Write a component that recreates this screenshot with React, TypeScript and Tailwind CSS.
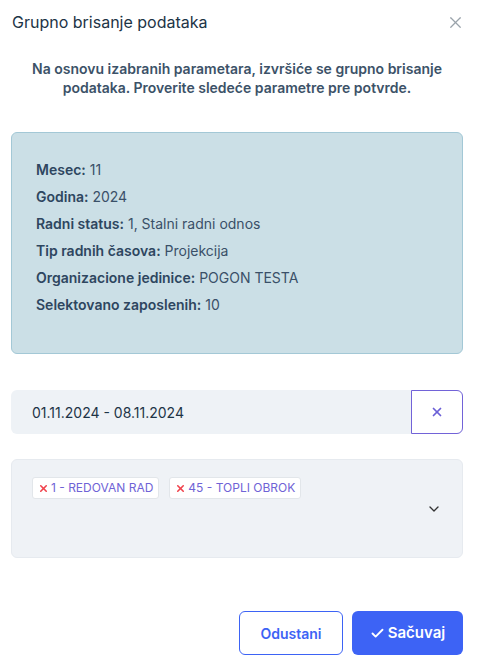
import { X, ChevronDown, Check } from "lucide-react";

const rows: [string, string][] = [
  ["Mesec:", "11"],
  ["Godina:", "2024"],
  ["Radni status:", "1, Stalni radni odnos"],
  ["Tip radnih časova:", "Projekcija"],
  ["Organizacione jedinice:", "POGON TESTA"],
  ["Selektovano zaposlenih:", "10"],
];

export default function App() {
  return (
    <main
      className="w-[477px] h-[670px] bg-white pl-[11px] pr-[14px] text-[#34495e]"
      style={{ fontFamily: "Inter, 'Noto Sans', sans-serif" }}
    >
      <div className="flex items-center justify-between h-[44px] pl-px">
        <h3 className="text-[16px] text-[#1d3446]">Grupno brisanje podataka</h3>
        <X className="w-[19px] h-[19px] text-[#9aa3ab] mr-[-2px]" strokeWidth={1.5} />
      </div>

      <p className="mt-[15px] text-center text-[14px] font-semibold leading-[19px] text-[#3c5268]">
        Na osnovu izabranih parametara, izvršiće se grupno brisanje
        <br />
        podataka. Proverite sledeće parametre pre potvrde.
      </p>

      <div className="mt-[35px] h-[222px] rounded-md border border-[#a3c8d6] bg-[#cbdfe6] px-6 pt-[23px]">
        {rows.map(([k, v]) => (
          <p key={k} className="text-[14px] leading-[27px] text-[#3a5068]">
            <span className="font-semibold text-[#2e4660]">{k}</span> {v}
          </p>
        ))}
      </div>

      <div className="mt-[36px] flex h-[44px] rounded-md bg-[#eef2f6]">
        <div className="flex flex-1 items-center pl-[21px] text-[14px] text-[#1d3446]">
          01.11.2024 - 08.11.2024
        </div>
        <button className="flex w-[52px] items-center justify-center rounded-r-md border border-[#7263d8] bg-white">
          <X className="w-[14px] h-[14px] text-[#6b5fd6]" strokeWidth={3} />
        </button>
      </div>

      <div className="mt-[25px] flex h-[99px] rounded-md border border-[#e6eaef] bg-[#eff2f6] pl-[20px] pr-[20px] pt-[17px]">
        <div className="flex flex-1 items-start gap-[10px]">
          <span className="flex h-[22px] items-center gap-[2px] rounded-[3px] border border-[#e2e6ea] bg-white px-[5px] text-[12px] text-[#6f63d6]">
            <X className="w-[11px] h-[11px] text-[#f0434d]" strokeWidth={3.5} />
            1 - REDOVAN RAD
          </span>
          <span className="flex h-[22px] items-center gap-[2px] rounded-[3px] border border-[#e2e6ea] bg-white px-[5px] text-[12px] text-[#6f63d6]">
            <X className="w-[11px] h-[11px] text-[#f0434d]" strokeWidth={3.5} />
            45 - TOPLI OBROK
          </span>
        </div>
        <ChevronDown className="mt-[24px] w-[16px] h-[16px] text-[#333]" strokeWidth={2} />
      </div>

      <div className="mt-[53px] flex justify-end gap-[9px]">
        <button className="h-[44px] w-[104px] rounded-md border border-[#3d63f5] bg-white text-[14px] font-semibold text-[#3d63f5]">
          Odustani
        </button>
        <button className="flex h-[44px] w-[111px] items-center justify-center gap-[3px] rounded-md bg-[#3d63f5] text-[15px] font-semibold text-white">
          <Check className="w-[15px] h-[15px]" strokeWidth={3} />
          Sačuvaj
        </button>
      </div>
    </main>
  );
}
